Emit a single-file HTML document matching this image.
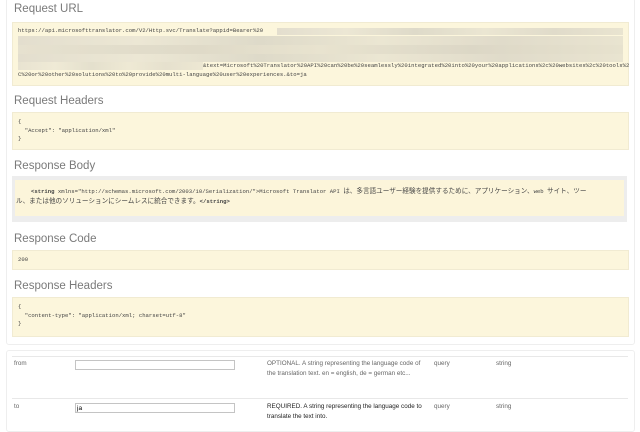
<!DOCTYPE html>
<html><head><meta charset="utf-8"><style>
body{margin:0;width:640px;height:425px;background:#fff;position:relative;overflow:hidden;font-family:"Liberation Sans","Noto Sans CJK JP",sans-serif;}
.panel{position:absolute;left:6px;top:-2px;width:627px;height:345px;border:1px solid #eeeeee;border-radius:3px;}
.h{position:absolute;left:14px;font-size:11.5px;color:#7a7a7a;}
.blk{position:absolute;left:12px;width:615px;background:#fcf6dc;border:1px solid #f1ebd2;font-family:"Liberation Mono","Noto Sans CJK JP",monospace;font-size:5.6px;color:#444;line-height:8.7px;}
.blur{position:absolute;height:9px;background:linear-gradient(90deg,#e3dece,#ece7d4 20%,#dedac9 40%,#ebe6d2 60%,#e0dbca 80%,#e9e4d0);}
.p2{position:absolute;left:6px;top:350px;width:627px;height:80px;border:1px solid #eeeeee;border-radius:3px;}
.t{position:absolute;font-size:6.3px;color:#666;line-height:9.5px;}
.in{position:absolute;left:75px;width:160px;height:10px;border:1px solid #c4c4c4;background:#fff;font-size:6.5px;line-height:9px;padding-left:1px;box-sizing:border-box;}
</style></head><body>
<div class="panel"></div>
<div class="h" style="top:3px">Request URL</div>
<div class="blk" style="top:22px;height:62px">
<div style="position:absolute;left:5px;top:4px">https://api.microsofttranslator.com/V2/Http.svc/Translate?appid=Bearer%20</div>
<div class="blur" style="left:264px;top:5px;width:346px;height:7px"></div>
<div class="blur" style="left:5px;top:13px;width:605px"></div>
<div class="blur" style="left:5px;top:22px;width:605px;background:linear-gradient(90deg,#e6e1cf,#dfdac8 30%,#e8e3cf 50%,#dcd7c6 75%,#e7e2ce)"></div>
<div class="blur" style="left:5px;top:31px;width:605px;height:8px"></div>
<div class="blur" style="left:5px;top:39px;width:185px;height:8px;opacity:.8"></div>
<div style="position:absolute;left:190px;top:39px;white-space:nowrap">&amp;text=Microsoft%20Translator%20API%20can%20be%20seamlessly%20integrated%20into%20your%20applications%2c%20websites%2c%20tools%2</div>
<div style="position:absolute;left:5px;top:48px;white-space:nowrap">C%20or%20other%20solutions%20to%20provide%20multi-language%20user%20experiences.&amp;to=ja</div>
</div>
<div class="h" style="top:95px">Request Headers</div>
<div class="blk" style="top:112px;height:36px"><div style="position:absolute;left:5px;top:5px;white-space:pre">{
  "Accept": "application/xml"
}</div></div>
<div class="h" style="top:160px">Response Body</div>
<div style="position:absolute;left:12px;top:176px;width:615px;height:46px;background:#ededed"></div>
<div class="blk" style="top:180px;left:15px;width:609px;height:36px;border:none;background:#fcf5da"><div style="position:absolute;left:16px;top:8px;white-space:nowrap;font-weight:bold">&lt;string <span style="font-weight:normal">xmlns="http://schemas.microsoft.com/2003/10/Serialization/"&gt;Microsoft Translator API <span style="font-size:6.6px">は、多言語ユーザー経験を提供するために、アプリケーション、</span>web <span style="font-size:6.6px">サイト、ツー</span></span></div><div style="position:absolute;left:1px;top:18px;white-space:nowrap"><span style="font-size:6.6px">ル、または他のソリューションにシームレスに統合できます。</span><b>&lt;/string&gt;</b></div></div>
<div class="h" style="top:233px">Response Code</div>
<div class="blk" style="top:250px;height:18px"><div style="position:absolute;left:5px;top:5px">200</div></div>
<div class="h" style="top:280px">Response Headers</div>
<div class="blk" style="top:297px;height:38px"><div style="position:absolute;left:5px;top:5px;white-space:pre">{
  "content-type": "application/xml; charset=utf-8"
}</div></div>
<div class="p2"></div>
<div style="position:absolute;left:12px;top:356px;width:616px;height:1px;background:#e8e8e8"></div>
<div style="position:absolute;left:12px;top:398px;width:616px;height:1px;background:#e8e8e8"></div>
<div class="t" style="left:14px;top:359px">from</div>
<div class="in" style="top:360px"></div>
<div class="t" style="left:267px;top:359px;width:160px">OPTIONAL. A string representing the language code of the translation text. en = english, de = german etc...</div>
<div class="t" style="left:434px;top:359px">query</div>
<div class="t" style="left:496px;top:359px">string</div>
<div class="t" style="left:14px;top:402px">to</div>
<div class="in" style="top:403px">ja</div>
<div class="t" style="left:267px;top:402px;width:160px;color:#222">REQUIRED. A string representing the language code to translate the text into.</div>
<div class="t" style="left:434px;top:402px">query</div>
<div class="t" style="left:496px;top:402px">string</div>
</body></html>
